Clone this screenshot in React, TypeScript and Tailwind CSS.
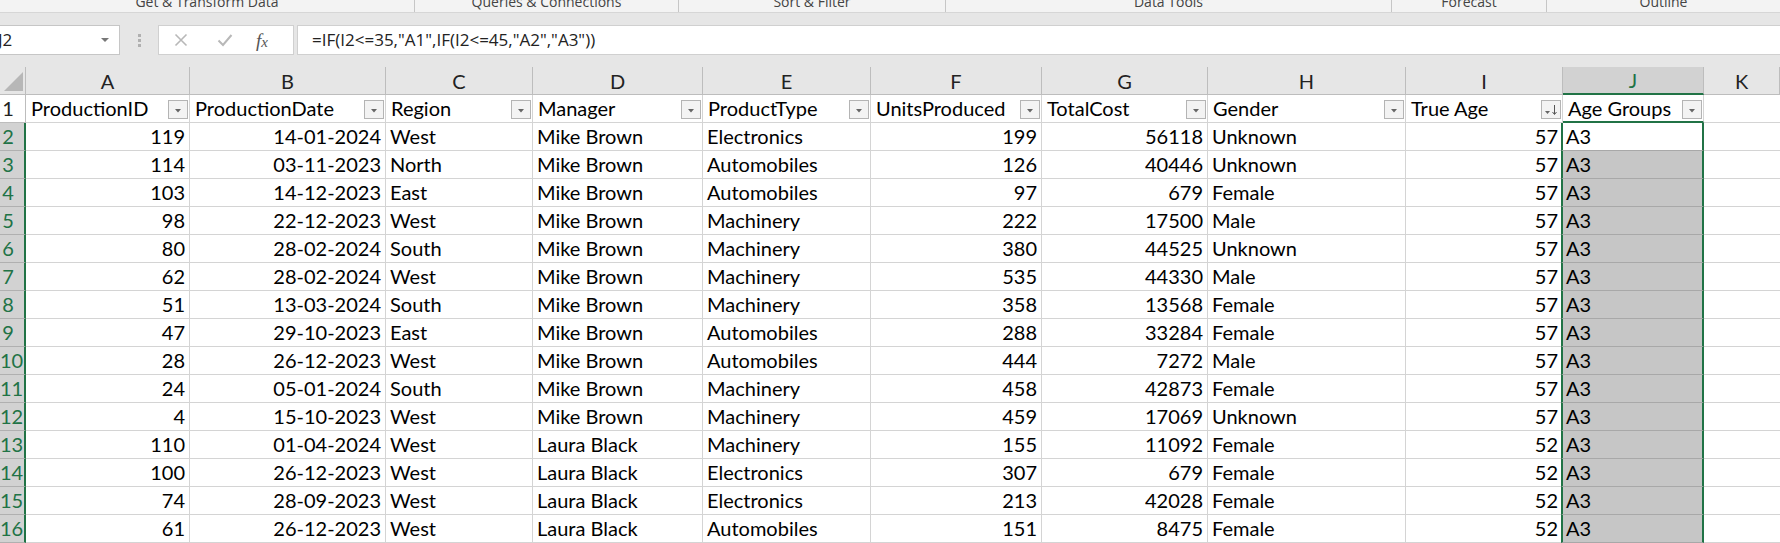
import React from "react";

const rows: (string | number)[][] = [
  [2, "119", "14-01-2024", "West", "Mike Brown", "Electronics", "199", "56118", "Unknown", "57"],
  [3, "114", "03-11-2023", "North", "Mike Brown", "Automobiles", "126", "40446", "Unknown", "57"],
  [4, "103", "14-12-2023", "East", "Mike Brown", "Automobiles", "97", "679", "Female", "57"],
  [5, "98", "22-12-2023", "West", "Mike Brown", "Machinery", "222", "17500", "Male", "57"],
  [6, "80", "28-02-2024", "South", "Mike Brown", "Machinery", "380", "44525", "Unknown", "57"],
  [7, "62", "28-02-2024", "West", "Mike Brown", "Machinery", "535", "44330", "Male", "57"],
  [8, "51", "13-03-2024", "South", "Mike Brown", "Machinery", "358", "13568", "Female", "57"],
  [9, "47", "29-10-2023", "East", "Mike Brown", "Automobiles", "288", "33284", "Female", "57"],
  [10, "28", "26-12-2023", "West", "Mike Brown", "Automobiles", "444", "7272", "Male", "57"],
  [11, "24", "05-01-2024", "South", "Mike Brown", "Machinery", "458", "42873", "Female", "57"],
  [12, "4", "15-10-2023", "West", "Mike Brown", "Machinery", "459", "17069", "Unknown", "57"],
  [13, "110", "01-04-2024", "West", "Laura Black", "Machinery", "155", "11092", "Female", "52"],
  [14, "100", "26-12-2023", "West", "Laura Black", "Electronics", "307", "679", "Female", "52"],
  [15, "74", "28-09-2023", "West", "Laura Black", "Electronics", "213", "42028", "Female", "52"],
  [16, "61", "26-12-2023", "West", "Laura Black", "Automobiles", "151", "8475", "Female", "52"],
];

const rightAligned = [true, true, false, false, false, true, true, false, true];

const headers = [
  "ProductionID",
  "ProductionDate",
  "Region",
  "Manager",
  "ProductType",
  "UnitsProduced",
  "TotalCost",
  "Gender",
  "True Age",
  "Age Groups",
];

const letters = ["A", "B", "C", "D", "E", "F", "G", "H", "I", "J", "K"];

const GRID =
  "grid grid-cols-[26px_164px_196px_147px_170px_168px_171px_166px_198px_157px_141px_1fr]";

function FilterBtn({ sorted }: { sorted?: boolean }) {
  return (
    <div className="absolute right-[1px] top-[5px] w-[20px] h-[19px] border border-[#b4b4b4] bg-[#f3f3f3] flex items-center justify-center">
      {sorted ? (
        <svg width="16" height="14" viewBox="0 0 16 14">
          <path d="M2 8 L7 8 L4.5 11 Z" fill="#666" />
          <path d="M11.5 2 L11.5 11" stroke="#555" strokeWidth="1" />
          <path d="M9.5 9 L11.5 11.5 L13.5 9" stroke="#555" strokeWidth="1" fill="none" />
        </svg>
      ) : (
        <svg width="10" height="8" viewBox="0 0 10 8">
          <path d="M2 3 L8 3 L5 6.5 Z" fill="#666" />
        </svg>
      )}
    </div>
  );
}

const ribbonGroups = [
  { label: "Get & Transform Data", w: 415 },
  { label: "Queries & Connections", w: 264 },
  { label: "Sort & Filter", w: 267 },
  { label: "Data Tools", w: 446 },
  { label: "Forecast", w: 155 },
  { label: "Outline", w: 233 },
];

export default function App() {
  const font = { fontFamily: "Lato, 'Liberation Sans', sans-serif" };
  return (
    <div className="w-[1780px] h-[543px] overflow-hidden bg-[#e6e6e6] select-none" style={font}>
      {/* ribbon group labels */}
      <div className="h-[13px] bg-[#f3f3f3] border-b border-[#d6d6d6] flex overflow-hidden">
        {ribbonGroups.map((g, i) => (
          <div
            key={g.label}
            className={`shrink-0 h-[12px] relative flex justify-center ${i < ribbonGroups.length - 1 ? "border-r border-[#c6c6c6]" : ""}`}
            style={{ width: g.w }}
          >
            <span
              className="text-[14px] leading-[14px] text-[#444] whitespace-nowrap -mt-[5px]"
              style={{ fontFamily: "'Open Sans', 'Noto Sans', sans-serif" }}
            >
              {g.label}
            </span>
          </div>
        ))}
      </div>
      {/* formula bar */}
      <div className="h-[54px] pt-[12px] flex items-start">
        <div className="w-[120px] h-[30px] bg-white border border-[#c6c6c6] border-l-0 flex items-center justify-between">
          <span className="text-[17px] text-[#222] -ml-[2px]" style={{ fontFamily: "'Open Sans', sans-serif" }}>J2</span>
          <svg width="10" height="6" viewBox="0 0 10 6" className="mr-[9px]">
            <path d="M1 1 L9 1 L5 5 Z" fill="#777" />
          </svg>
        </div>
        <div className="w-[38px] h-[30px] flex items-center justify-center">
          <div className="flex flex-col gap-[2px]">
            <div className="w-[3px] h-[3px] bg-[#b0b0b0]" />
            <div className="w-[3px] h-[3px] bg-[#b0b0b0]" />
            <div className="w-[3px] h-[3px] bg-[#b0b0b0]" />
          </div>
        </div>
        <div className="w-[136px] h-[30px] bg-white border border-[#d0d0d0] flex items-center">
          <svg width="14" height="14" viewBox="0 0 14 14" className="ml-[15px]">
            <path d="M1.5 1.5 L12.5 12.5 M12.5 1.5 L1.5 12.5" stroke="#b8b8b8" strokeWidth="1.6" />
          </svg>
          <svg width="16" height="14" viewBox="0 0 16 14" className="ml-[29px]">
            <path d="M1.5 7.5 L6 12 L14.5 2" stroke="#b8b8b8" strokeWidth="2" fill="none" />
          </svg>
          <span
            className="ml-[23px] text-[19px] italic text-[#555] leading-none"
            style={{ fontFamily: "'Liberation Serif', 'DejaVu Serif', serif" }}
          >
            f<span className="text-[15px]">x</span>
          </span>
        </div>
        <div className="ml-[3px] flex-1 h-[30px] bg-white border border-[#d0d0d0] border-r-0 flex items-center pl-[14px]">
          <span className="text-[17px] text-[#222]" style={{ fontFamily: "'Open Sans', sans-serif" }}>
            =IF(I2&lt;=35,"A1",IF(I2&lt;=45,"A2","A3"))
          </span>
        </div>
      </div>
      {/* column headers */}
      <div className={`${GRID} h-[28px] text-[20px] text-[#222]`}>
        <div className="h-[28px] border-r border-b border-[#bdbdbd] bg-[#e6e6e6] relative overflow-hidden">
          <svg width="22" height="22" viewBox="0 0 22 22" className="absolute left-[3px] top-[4px]">
            <path d="M20 1 L20 20 L1 20 Z" fill="#b7b7b7" />
          </svg>
        </div>
        {letters.map((l) => {
          const sel = l === "J";
          return (
            <div
              key={l}
              className={`h-[28px] flex items-center justify-center border-r ${
                sel
                  ? "bg-[#d2d2d2] text-[#217346] border-b-2 border-b-[#217346] border-r-[#bdbdbd]"
                  : "bg-[#e6e6e6] border-b border-[#bdbdbd]"
              }`}
            >
              {l}
            </div>
          );
        })}
      </div>
      {/* row 1 headers */}
      <div className={`${GRID} h-[28px] text-[20px] text-black bg-white`}>
        <div className="h-[28px] border-r border-b border-[#bdbdbd] bg-white relative">
          <div className="w-[16px] text-center leading-[27px] text-[#222]">1</div>
        </div>
        {headers.map((h, i) => (
          <div
            key={h}
            className={`h-[28px] relative border-r border-b border-[#d4d4d4] pl-[5px] leading-[27px] whitespace-nowrap ${
              i === 9 ? "border-b-2 border-b-[#217346]" : ""
            }`}
          >
            {h}
            <FilterBtn sorted={i === 8} />
          </div>
        ))}
        <div className="h-[28px] border-b border-[#d4d4d4]" />
      </div>
      {/* data rows */}
      {rows.map((r, ri) => (
        <div key={ri} className={`${GRID} h-[28px] text-[20px] text-black bg-white`}>
          <div className="h-[28px] border-r-2 border-r-[#217346] border-b border-b-[#b0b0b0] bg-[#d2d2d2] text-[#217346]">
            <div className="w-[16px] text-center leading-[27px]">{r[0]}</div>
          </div>
          {r.slice(1).map((c, ci) => (
            <div
              key={ci}
              className={`h-[28px] border-r border-b border-[#d4d4d4] leading-[27px] whitespace-nowrap ${
                rightAligned[ci] ? "text-right pr-[4px]" : "pl-[4px]"
              }`}
            >
              {c}
            </div>
          ))}
          <div
            className={`h-[28px] border-l-2 border-r-2 border-l-[#217346] border-r-[#217346] border-b leading-[27px] pl-[3px] -ml-[2px] ${
              ri === 0 ? "bg-white border-b-[#a8a8a8]" : "bg-[#c6c6c6] border-b-[#a8a8a8]"
            }`}
          >
            A3
          </div>
          <div className="h-[28px] border-b border-[#d4d4d4]" />
        </div>
      ))}
    </div>
  );
}
